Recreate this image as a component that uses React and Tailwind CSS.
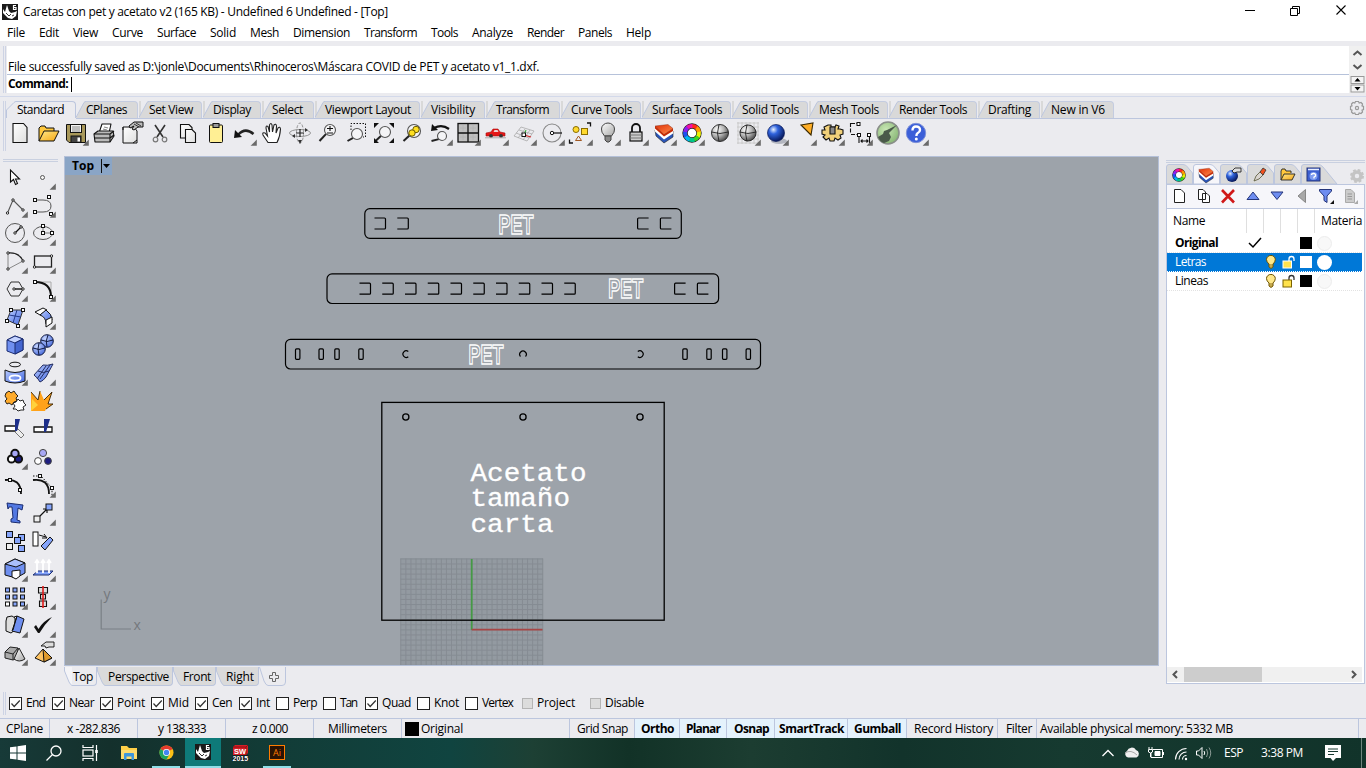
import React, { useLayoutEffect, useRef, useState } from "react";

/* Text set to the width of its box by adjusting the letter spacing */
function Fit({ className = "", children }) {
  const box = useRef(null);
  const inner = useRef(null);
  const [spacing, setSpacing] = useState(0);
  useLayoutEffect(() => {
    const n = String(children).length;
    const natural = inner.current.getBoundingClientRect().width;
    setSpacing((box.current.getBoundingClientRect().width - natural) / n);
  }, [children]);
  return (
    <span ref={box} className={"block shrink-0 whitespace-nowrap " + className}>
      <span ref={inner} style={{ letterSpacing: spacing ? `${spacing}px` : undefined }}>
        {children}
      </span>
    </span>
  );
}

const K = "#111";
const sq = (x, y, f = "#fff", s = 3) => (
  <rect x={x - s / 2} y={y - s / 2} width={s} height={s} fill={f} stroke={K} strokeWidth="1" />
);
const dot = (x, y) => <circle cx={x} cy={y} r="1.2" fill="#fff" stroke={K} strokeWidth="0.9" />;

function Cell({ children, fly }) {
  return (
    <svg width="28" height="28" viewBox="-14 -14 28 28" fill="none" className="block shrink-0">
      {children}
      {fly && <path d="M12.8 6.6V12.8H6.6Z" fill="#6a6a6a" />}
    </svg>
  );
}

function Defs() {
  return (
    <svg width="0" height="0" className="absolute">
      <defs>
        <linearGradient id="blue" x1="0" y1="0" x2="1" y2="1">
          <stop offset="0" stopColor="#b9ccff" /><stop offset="1" stopColor="#4468e0" />
        </linearGradient>
        <linearGradient id="yellow" x1="0" y1="0" x2="1" y2="1">
          <stop offset="0" stopColor="#ffe98a" /><stop offset="1" stopColor="#f5a613" />
        </linearGradient>
        <linearGradient id="orange" x1="0" y1="0" x2="1" y2="1">
          <stop offset="0" stopColor="#e03208" /><stop offset="1" stopColor="#ff8a4a" />
        </linearGradient>
        <linearGradient id="grey" x1="0" y1="0" x2="1" y2="1">
          <stop offset="0" stopColor="#ffffff" /><stop offset="1" stopColor="#a8a8a8" />
        </linearGradient>
        <linearGradient id="paper" x1="0" y1="0" x2="1" y2="1">
          <stop offset="0" stopColor="#ffffff" /><stop offset="1" stopColor="#dedede" />
        </linearGradient>
        <radialGradient id="ballGrey" cx="0.35" cy="0.3" r="0.75">
          <stop offset="0" stopColor="#fff" /><stop offset="0.5" stopColor="#b5b5b5" /><stop offset="1" stopColor="#444" />
        </radialGradient>
        <radialGradient id="ballBlue" cx="0.35" cy="0.3" r="0.75">
          <stop offset="0" stopColor="#e6f0ff" /><stop offset="0.35" stopColor="#2f63dd" /><stop offset="1" stopColor="#04124f" />
        </radialGradient>
        <radialGradient id="ballLight" cx="0.35" cy="0.3" r="0.8">
          <stop offset="0" stopColor="#c9d8ff" /><stop offset="1" stopColor="#3f63d8" />
        </radialGradient>
        <radialGradient id="ballGreen" cx="0.4" cy="0.35" r="0.7">
          <stop offset="0" stopColor="#c8e6b4" /><stop offset="1" stopColor="#86b573" />
        </radialGradient>
      </defs>
    </svg>
  );
}

const hues = ["#ff2a1c", "#ff9a00", "#e9f000", "#3fd51c", "#00c68a", "#00b5f0", "#2050f0", "#8a20f0", "#f010a8"];
function Wheel({ r = 7, w = 4 }) {
  return (
    <g>
      <circle r={r} stroke="#222" strokeWidth={w + 1.4} fill="#fff" />
      {hues.map((c, i) => {
        const a = ((i * 40 - 90) * Math.PI) / 180;
        const b = (((i + 1) * 40 - 87) * Math.PI) / 180;
        return (
          <path key={c} stroke={c} strokeWidth={w}
            d={`M${r * Math.cos(a)} ${r * Math.sin(a)}A${r} ${r} 0 0 1 ${r * Math.cos(b)} ${r * Math.sin(b)}`} />
        );
      })}
    </g>
  );
}
const Lens = ({ x = 2, y = -3, r = 5.5 }) => (
  <g>
    <path d={`M${x - r * 0.7} ${y + r * 0.7}L-8.5 8`} stroke="#222" strokeWidth="2" />
    <circle cx={x} cy={y} r={r} stroke="#555" strokeWidth="1.1" fill="#f4f4f6" />
  </g>
);
const Page = () => <path d="M-7 -9.500H3.500L7 -5.500V9.500H-7Z" fill="url(#paper)" stroke={K} strokeWidth="1.1" />;
const Layers = () => (
  <g strokeLinejoin="round">
    <path d="M-9 -3L-8 3L0 10L9 4V-2L0 4Z" fill="#2a55b8" stroke="#222" strokeWidth="0.6" />
    <path d="M-9 -5V-1.500L0 6.500L9 0.500V-3L0 3Z" fill="#fff" />
    <path d="M-9 -7V-4.500L0 3.500L9 -2V-4.500L0 1Z" fill="#c92a04" />
    <path d="M-9 -7L4 -8.500L9 -4.500L0 1.500Z" fill="url(#orange)" stroke="#7a2410" strokeWidth="0.4" />
  </g>
);
const Ball = ({ f = "url(#ballGrey)", r = 8.500 }) => (
  <g>
    <circle r={r} fill={f} stroke="#222" strokeWidth="0.9" />
    <path d="M-8.500 -1Q0 2 8.500 -1M-1 -8.500Q-4 0 -1 8.500" stroke="#222" strokeWidth="0.9" />
  </g>
);

const tools = [
  [0, <Page />],
  [0, <g stroke={K} strokeWidth="1" strokeLinejoin="round"><path d="M-9 8V-5L-7 -7H-3L-2 -5H6V-2" fill="#ffc83d" /><path d="M-9 8L-4 -2H11L6 8Z" fill="url(#yellow)" /></g>],
  [1, <g stroke={K} strokeWidth="1"><path d="M-9.500 -8.500H9.500V9.500H-7L-9.500 7Z" fill="#a8985a" /><rect x="-5.500" y="-8.500" width="11" height="8" fill="#f4f4f4" /><path d="M-4 -6H4M-4 -4H4M-4 -2H4" stroke="#888" /><rect x="-5" y="3" width="10" height="6.500" fill="#444" /><rect x="1.500" y="4.500" width="2.500" height="4" fill="#fff" stroke="none" /></g>],
  [0, <g stroke={K} strokeWidth="1.100" strokeLinejoin="round"><path d="M-5 0L-2 -9H7L5 0" fill="#fff" /><path d="M-10 1L-6 -2H9L10 3L6 9H-9Z" fill="#bbb" /><path d="M-10 1H6V9M-9 5H6M6 1L10 -2M6 5L10 2" /><path d="M0 -6L4 -5M-1 -4L3 -3" stroke="#888" /></g>],
  [0, <g><path d="M-9 -6H2L5 -2V10H-9Z" fill="url(#paper)" stroke={K} /><path d="M-9 -6V-3M1 10L5 7" stroke={K} /><path d="M-3 -7L2 -11H11V-6H6L2 -3L0 -4L2 -7L-2 -5Z" fill="#bbb" stroke={K} /><path d="M2 -9L7 -6M4 -10L9 -7" stroke={K} strokeWidth="0.800" /></g>],
  [0, <g><path d="M-5 -8L3 4M5 -8L-3 4" stroke="#333" strokeWidth="1.600" /><circle cx="-4.500" cy="6.500" r="2.300" stroke="#777" strokeWidth="1.200" /><circle cx="4.500" cy="6.500" r="2.300" stroke="#777" strokeWidth="1.200" /></g>],
  [0, <g fill="url(#paper)" stroke={K} strokeWidth="1.100"><path d="M-7.500 -8.500H1L4 -5.500V5H-7.500Z" /><path d="M-2.500 -3.500H4L7.500 0V9.500H-2.500Z" /></g>],
  [0, <g stroke={K}><rect x="-6.500" y="-8" width="13" height="17.500" rx="1" fill="#ffef94" /><rect x="-3" y="-9.500" width="6" height="4" fill="#999" /></g>],
  [1, <g><path d="M-6 2Q1 -6 9.500 1" stroke="#222" strokeWidth="2.600" /><path d="M-10 5L-9 -3L-2 4Z" fill="#111" /></g>],
  [0, <path d="M-4 9.500L-9 2Q-10 -1 -7 0L-4.500 3L-6 -5Q-6 -8 -4 -6.500L-2.500 -1L-2.500 -8Q-1 -11 0 -8L0.500 -1L2 -8Q4 -10 4.500 -7L4 0L6 -5Q8 -7 8.500 -4Q8 4 5 9.500Z" fill="#fff" stroke="#222" strokeWidth="1.100" />],
  [0, <g strokeWidth="0.900"><ellipse rx="10.500" ry="3.500" stroke="#888" /><ellipse rx="3.500" ry="10" stroke="#888" strokeDasharray="3 1.500" /><path d="M-4 0H4M0 -4V4" stroke="#222" strokeWidth="1.200" /><path d="M5 -5L8 -3L5 -1ZM-5 5L-8 3L-5 1ZM0 11L2 7L-2 7Z" fill="#333" /></g>],
  [0, <g><Lens /><path d="M-1 -4.500H5M2 -7V-2M-1 0H5" stroke={K} strokeWidth="1.100" /></g>],
  [0, <g><Lens x={1} y={1} /><path d="M-5 -3V-9.500H9.500V4H7" stroke={K} strokeDasharray="1.500 1.500" /></g>],
  [0, <g><Lens x={1} y={-1} /><path d="M-10 -10H-5L-10 -5ZM10 -10H5L10 -5ZM10 10H5L10 5ZM-10 10H-5L-10 5Z" fill="#111" /></g>],
  [0, <g><Lens x={2} y={-2} r={6.500} /><circle cx="4" cy="-3.500" r="3.200" fill="#ffdf20" stroke="#6b5c00" /><circle cx="0" cy="0" r="3.200" fill="#ffdf20" stroke="#6b5c00" /></g>],
  [1, <g><Lens x={2} y={3} r={4.500} /><path d="M-6 -5Q2 -9 9 -4" stroke="#111" strokeWidth="2.200" /><path d="M-9 -2L-8 -9L-2 -3Z" fill="#111" /></g>],
  [1, <g><rect x="-10" y="-9.500" width="20.500" height="18.500" fill="#c0c0c0" stroke={K} strokeWidth="1.300" /><path d="M0 -9V9M-10 0H10" stroke={K} strokeWidth="1.300" /><path d="M-5 -8V-2M-8 -5H-2M2 -5H8M5 -8V-2M-8 4H-2M-5 1V7M2 4H8M5 1V7" stroke="#b2b2b2" strokeWidth="0.800" /></g>],
  [1, <g><path d="M-10 3V0L-5 -1L-3 -4H2L4 -1L9 0V3Z" fill="#e51616" stroke="#a80f0f" strokeWidth="0.600" /><path d="M-1.500 -3H1.500L2.500 -1H-2.500Z" fill="#f0d0d0" /><circle cx="-5" cy="3" r="1.900" fill="#333" /><circle cx="5" cy="3" r="1.900" fill="#333" /><path d="M-11 4.800H10" stroke="#aaa" /></g>],
  [1, <g><path d="M-10 3L-3 -6L10 -2L3 8ZM-8 0L5 5M-5 -3L8 1M-6 5L1 -4M-1 7L6 -3" stroke="#aaa" strokeWidth="0.800" /><path d="M0 2L7 4" stroke="#c22" strokeWidth="1.300" /><path d="M0 2L2 -3" stroke="#2a2" /><rect x="-2" y="0" width="3.500" height="3.500" fill="#fff" stroke={K} /></g>],
  [1, <g><circle r="9" stroke="#888" strokeWidth="1.100" /><path d="M0 0H10" stroke={K} strokeWidth="1.200" /><circle r="1.700" fill="#fff" stroke={K} /></g>],
  [1, <g><path d="M7 -10H10.500V-6.500M-7 10H-10.500V6.500" stroke={K} strokeWidth="1.300" /><circle cx="-4" cy="-3.500" r="3" fill="#ffd92e" stroke="#8a6d00" /><rect x="1.500" y="-4.500" width="6" height="6" fill="#ffd92e" stroke="#8a6d00" /><path d="M-4.500 7.500L-1.500 3L1.500 7.500Z" stroke="#a25822" /></g>],
  [1, <g stroke="#444"><path d="M-3.500 3Q-7 -1 -6.500 -4A6.500 6 0 0 1 6.500 -4Q7 -1 3.500 3Z" fill="url(#grey)" /><path d="M-3 3H3V7L1 9H-1L-3 7Z" fill="#888" /></g>],
  [1, <g stroke={K}><path d="M-4 -1V-5A4 4 0 0 1 4 -5V-1" strokeWidth="1.800" /><rect x="-6" y="-1" width="12" height="9" fill="#ccc" strokeWidth="1.200" /><path d="M-6 2H6M-6 5H6" stroke="#777" /></g>],
  [1, <Layers />],
  [1, <Wheel />],
  [0, <Ball />],
  [1, <g><path d="M-11 -10H11M-11 -6H11M-11 -2H11M-11 2H11M-11 6H11M-11 10H11M-10 -11V11M-6 -11V11M-2 -11V11M2 -11V11M6 -11V11M10 -11V11" stroke="#c4c4c4" strokeWidth="0.800" /><Ball r={8} /></g>],
  [1, <g><ellipse cx="3" cy="8" rx="8" ry="3" fill="#b4b7c0" /><circle r="8.500" fill="url(#ballBlue)" stroke="#0a1a5c" strokeWidth="0.700" /></g>],
  [1, <path d="M-3 -8L9 -10L7 2Z" fill="#ffae26" stroke="#3b2a00" strokeWidth="1.100" />],
  [1, <g><path d="M-4 -8H-1V-6H3L4 -8L7 -7L6 -4L8 -4L11 -3V1L8 2L9 5L6 7L3 5L2 8H-2L-3 5L-6 7L-9 4L-7 2L-10 1V-3L-7 -3L-8 -6L-6 -7Z" fill="#f0d07a" stroke={K} strokeWidth="1.100" /><path d="M-2 -6V1H3V-6Z" fill="#888" stroke={K} strokeWidth="1.100" /></g>],
  [1, <g stroke={K} strokeWidth="1.100"><path d="M-9.500 -10V1M-9 -9.500H-2M-9 1.500H-1" strokeDasharray="4 1.500" /><path d="M-1 2V10M9.500 2V10M1 8H8M2.500 6.500L1 8L2.500 9.500M6.500 6.500L8 8L6.500 9.500" />{sq(-1.500, -9)}{sq(-1, 2)}{sq(9, 2)}</g>],
  [0, <g><circle r="11" fill="url(#ballGreen)" stroke="#8a8f8a" strokeWidth="1.600" /><path d="M-10 4L-5 1L-4 -2L-1 -3L9 -8L1 0L3 4L1 8L-4 10Q-8 9 -10 4Z" fill="#4a5a4a" /></g>],
  [1, <g><circle r="9.700" fill="#3b5fd8" stroke="#7d90d8" /><path d="M-3.500 -2.500Q-3.500 -6.500 0 -6.500Q4 -6.500 4 -3Q4 -1 1.500 0.300Q0.400 1 0.400 3" stroke="#fff" strokeWidth="2.400" /><circle cx="0.300" cy="6" r="1.500" fill="#fff" /></g>],
];

const palette = [
  [0, <path d="M-4.500 -7V5L-1.500 2.500L0.500 7.500L2.500 6.500L0.500 2H4.500Z" fill="#fff" stroke={K} strokeWidth="1.100" />],
  [1, <circle cx="-0.500" cy="0.500" r="2" fill="#f5f5f5" stroke="#555" />],
  [1, <g><path d="M-7.500 8L-2 -5L8 5" stroke="#555" strokeWidth="1.100" />{dot(-7.5, 8)}{dot(-2, -5)}{dot(8, 5)}</g>],
  [1, <g><path d="M-8 -5H0Q8 -5 8 1Q8 7 0 7H-8" stroke="#555" />{sq(-8, -5)}{sq(-8, 7)}{sq(6, -8)}{sq(8, 9)}</g>],
  [1, <g><circle r="9.500" stroke="#555" /><path d="M0 0L6 -6" stroke={K} strokeWidth="1.300" />{dot(0, 0)}{dot(6, -6)}</g>],
  [1, <g><ellipse rx="9.500" ry="6.500" stroke="#555" /><path d="M0 -6V0H9" stroke="#777" />{sq(0, -7)}{sq(0, 0)}{sq(9, 0)}</g>],
  [1, <g><path d="M-7 -8V8L8 0" stroke="#888" /><path d="M-7 -8Q4 -9 8 0" stroke="#222" strokeWidth="1.300" />{dot(-7, -8)}{dot(-7, 8)}{dot(8, 0)}</g>],
  [1, <g><rect x="-8.500" y="-5" width="17" height="11" stroke="#222" strokeWidth="1.300" />{dot(8.5, -5)}{dot(-8.5, 6)}</g>],
  [1, <g><path d="M-4 -7H4L8 0L4 7H-4L-8 0Z" stroke="#333" /><path d="M-1 0H8" stroke={K} strokeWidth="1.400" />{dot(-1, 0)}{dot(8, 0)}</g>],
  [1, <g><path d="M-8 -7H8V8" stroke="#aaa" /><path d="M-8 -7Q8 -7 8 8" stroke={K} strokeWidth="2" />{sq(-8, -7)}{sq(8, 8)}</g>],
  [1, <g><path d="M-4 -7L8 -7L3 8L-8 3Z" fill="url(#blue)" stroke="#333" /><path d="M2 -7L-2 6M-6 -2L6 0" stroke="#233a8a" />{sq(-4, -7)}{sq(8, -7)}{sq(3, 9)}{sq(-8, 4)}</g>],
  [1, <g stroke={K}><path d="M-8 -5L0 -9L4 -7L-3 -2Z" fill="#fff" /><path d="M-3 -2L3 -7Q9 -3 9 3L3 7Q3 0 -3 -2Z" fill="url(#blue)" /><path d="M3 3L9 0V6L3 10Z" fill="#fff" /></g>],
  [1, <g stroke="#1b2c70" strokeLinejoin="round"><path d="M-8 -5L0 -9L8 -6V5L0 9L-8 6Z" fill="#6f8ff0" /><path d="M-8 -5L0 -2L8 -6L0 -9Z" fill="#c3d2ff" /><path d="M0 -2V9L8 5V-6Z" fill="#4465cf" /></g>],
  [1, <g stroke="#111a40"><circle cx="4" cy="-4" r="6.300" fill="url(#ballLight)" /><circle cx="-4" cy="4" r="6.300" fill="url(#ballLight)" /><path d="M-10 3Q-4 6 2 3M-4 -2Q-6 4 -4 10M-2 -5Q4 -2 10 -5M5 -10Q2 -4 4 2" /></g>],
  [1, <g><ellipse cx="0" cy="-8.500" rx="5.500" ry="2.300" stroke={K} /><path d="M-10 -3Q0 2 10 -3V8Q0 12 -10 8Z" fill="url(#blue)" stroke={K} /><ellipse cx="0" cy="5" rx="5.500" ry="2.600" stroke="#fff" strokeWidth="1.800" /></g>],
  [1, <g stroke="#222c60" strokeLinejoin="round"><path d="M-9 2L0 -8Q4 -7 10 -9L3 4Q0 8 -3 9Q-5 5 -9 2Z" fill="url(#blue)" /><path d="M-5 -2Q0 1 6 -2M3 -7L-6 6M7 -8L-3 6" /></g>],
  [0, <g stroke={K} strokeWidth="0.900"><path d="M-9 -8L-6 -10L-4 -8L-1 -10L1 -7L3 -5L1 -3L2 0L-1 1L-3 4L-6 2L-8 3L-10 0L-8 -2L-10 -5Z" fill="#ffab2b" /><path d="M1 1L3 -2L5 0L8 -1L9 2L11 4L8 6L9 9L6 9L3 10L1 8L-2 8L0 5L-2 2Z" fill="#fff" /></g>],
  [0, <g><path d="M-12 -9L-5 -1L-3 -10L1 -1L9 -9L5 3H10L3 8L2 10H-12Z" fill="#ffa21a" /><path d="M-12 -9L-5 -1L-3 -10M1 -1L9 -9L5 3L10 3L3 8" stroke="#3a2200" strokeWidth="0.900" /><path d="M-12 10L-11 -2L-5 4Z" fill="#ffd23c" /></g>],
  [0, <g><path d="M-10 -3H2V2H-10Z" fill="#fff" stroke={K} strokeWidth="1.300" /><path d="M0 3L6 9L9 6L3 0Z" fill="#eee" stroke="#777" /><path d="M0 -10H5L2 2H0Z" fill="#1d2f8a" /></g>],
  [0, <g><path d="M-9 -2H9V3H-9Z" fill="#fff" stroke={K} strokeWidth="1.300" /><path d="M1 -10H7L3 3H1Z" fill="#1d2f8a" /></g>],
  [1, <g stroke={K} strokeWidth="2"><circle cx="-3.500" cy="2" r="3.600" fill="#fff" /><circle cx="3.500" cy="2" r="3.600" fill="#1d1d80" /><circle cx="0" cy="-3.500" r="3.700" fill="#a7a7f5" /></g>],
  [0, <g stroke="#444"><circle cx="-5" cy="4" r="3.400" fill="#fff" /><circle cx="5" cy="4" r="3.400" fill="#1d1d80" /><circle cx="0" cy="-4" r="3.600" fill="#a7a7f5" /></g>],
  [0, <g><path d="M-10 -5Q6 -7 6 9" stroke={K} strokeWidth="1.800" />{sq(-5, -5)}{sq(5, 5)}</g>],
  [1, <g><path d="M-10 -5Q6 -7 6 9" stroke={K} strokeWidth="1.800" /><path d="M-10 -9H-2L9 3V11" stroke={K} strokeDasharray="1.500 1.500" />{sq(-3, -9)}{sq(9, 3)}</g>],
  [0, <path d="M-8 -10L8 -8L7 -3L3 -5L2 7L5 8V10L-4 9V6L-2 5L-3 -6L-6 -6L-7 -4Z" fill="#5278e2" stroke="#1b2c70" strokeWidth="1" />],
  [1, <g><path d="M-3 3L4 -4M0 -4H4V0" stroke={K} strokeWidth="1.200" /><rect x="-9" y="3" width="6" height="6" fill="#eee" stroke={K} /><rect x="3" y="-9" width="6" height="6" fill="#86a5fb" stroke={K} /></g>],
  [0, <g stroke={K}><rect x="-8.500" y="-9.500" width="6" height="6" fill="#86a5fb" /><rect x="3.500" y="-6.500" width="6" height="6" fill="#86a5fb" /><rect x="-0.500" y="-3.500" width="6" height="6" fill="#86a5fb" /><rect x="-8.500" y="2.500" width="6" height="6" fill="#eee" /><rect x="3.500" y="4.500" width="6" height="6" fill="#86a5fb" /></g>],
  [0, <g><rect x="-10" y="-9" width="5" height="14" fill="#fff" stroke={K} /><path d="M-4 -6L3 -4M1 -7L4 -3L-1 -3" stroke={K} /><path d="M-2 5L7 -4L10 -1L2 9Z" fill="#86a5fb" stroke={K} /></g>],
  [1, <g stroke={K} strokeLinejoin="round"><path d="M-10 -5L0 -10L10 -6V4L1 9L-10 6Z" fill="#6f8ff0" /><path d="M-10 -5L1 -2L10 -6L0 -10Z" fill="#a9bffc" /><path d="M-3 8V2L5 1V7L1 10Z" fill="#fff" /></g>],
  [1, <g><path d="M-10 6L-5 2H10L6 6Z" fill="#7f9ff8" stroke="#1b2c70" /><path d="M-6 4V-8M0 4V-8M6 4V-8M-8 -6L-6 -9L-4 -6M-2 -6L0 -9L2 -6M4 -6L6 -9L8 -6" stroke="#fff" strokeWidth="1.800" /></g>],
  [1, <g>{[-7.5, 0, 7.500].map((x) => [-7, 0, 7].map((y) => <g key={x + "," + y}>{sq(x, y, x < 0 && y > 0 ? "#fff" : "#86a5fb", 4)}</g>))}</g>],
  [1, <g><path d="M-4.500 -9.500H4.500V-4H-4.500ZM-2.500 -2.500H2.500V2H-2.500ZM-3.500 4H3.500V9.500H-3.500Z" fill="#ddd" stroke={K} strokeWidth="1.100" /><path d="M0 -11V11" stroke="#e21b1b" strokeWidth="1.600" /></g>],
  [1, <g stroke={K}><path d="M-9 -4L-8 -8L-3 -9L0 -7V5L-4 8L-9 6Z" fill="#ddd" /><path d="M2 -9L9 -6L5 8L-3 6Z" fill="#6f8ff0" /><path d="M-2 5L2 -9L-1 -8" /></g>],
  [1, <path d="M-9 2L-7 0L-4.500 4Q0 -4 9 -8Q1 0 -3.500 8H-5Z" fill="#111" />],
  [1, <g stroke="#222"><path d="M-10 -1L-5 -6L3 -5V5L-2 7L-10 5Z" fill="#aaa" /><path d="M-10 -1L-2 1L3 -5M-2 1V7" /><path d="M4 -5L10 6Q4 10 -1 6Z" fill="url(#grey)" /></g>],
  [1, <g stroke={K}><path d="M-8 5L0 -4L9 5L1 9Z" fill="#ffc463" /><path d="M0 -4L1 9L9 5Z" fill="#e09a2c" /><path d="M-2 -7L3 -11H11V-6H6L3 -5L2 -7Z" fill="#ddd" strokeWidth="0.900" /></g>],
];

const MENU = [["File", "w-[18px]"], ["Edit", "w-[20px]"], ["View", "w-[25px]"], ["Curve", "w-[31px]"], ["Surface", "w-[39px]"], ["Solid", "w-[26px]"], ["Mesh", "w-[29px]"], ["Dimension", "w-[57px]"], ["Transform", "w-[53px]"], ["Tools", "w-[27px]"], ["Analyze", "w-[41px]"], ["Render", "w-[37px]"], ["Panels", "w-[34px]"], ["Help", "w-[25px]"]];

const TABS = [["CPlanes", "w-[63px]", "w-[41px]"], ["Set View", "w-[64px]", "w-[44px]"], ["Display", "w-[59px]", "w-[38px]"], ["Select", "w-[53px]", "w-[31px]"], ["Viewport Layout", "w-[106px]", "w-[86px]"], ["Visibility", "w-[65px]", "w-[44px]"], ["Transform", "w-[75px]", "w-[53px]"], ["Curve Tools", "w-[81px]", "w-[61px]"], ["Surface Tools", "w-[90px]", "w-[70px]"], ["Solid Tools", "w-[77px]", "w-[57px]"], ["Mesh Tools", "w-[80px]", "w-[60px]"], ["Render Tools", "w-[89px]", "w-[68px]"], ["Drafting", "w-[63px]", "w-[43px]"], ["New in V6", "w-[74px]", "w-[54px]"]];

const SNAPS = [["End", 1, "w-[43px]", "w-[19px]"], ["Near", 1, "w-[48px]", "w-[25px]"], ["Point", 1, "w-[51px]", "w-[28px]"], ["Mid", 1, "w-[44px]", "w-[21px]"], ["Cen", 1, "w-[44px]", "w-[20px]"], ["Int", 1, "w-[37px]", "w-[14px]"], ["Perp", 0, "w-[47px]", "w-[24px]"], ["Tan", 0, "w-[42px]", "w-[17px]"], ["Quad", 1, "w-[52px]", "w-[29px]"], ["Knot", 0, "w-[48px]", "w-[25px]"], ["Vertex", 0, "w-[57px]", "w-[31px]"], ["Project", 2, "w-[68px]", "w-[38px]"], ["Disable", 2, "w-[60px]", "w-[39px]"]];

const STATUS = [["CPlane", "w-[50px] pl-[6px]", "w-[37px]"], ["x -282.836", "w-[88px] pl-[17px]", "w-[53px]"], ["y 138.333", "w-[88px] pl-[20px]", "w-[48px]"], ["z 0.000", "w-[88px] pl-[26px]", "w-[36px]"], ["Millimeters", "w-[88px] pl-[14px]", "w-[59px]"], ["Original", "w-[168px] pl-[3px]", "w-[42px]", "swatch"], ["Grid Snap", "w-[65px] pl-[7px]", "w-[51px]"], ["Ortho", "w-[45px] pl-[6px]", "w-[33px]", "on"], ["Planar", "w-[47px] pl-[6px]", "w-[34px]", "on"], ["Osnap", "w-[48px] pl-[7px]", "w-[35px]", "on"], ["SmartTrack", "w-[73px] pl-[4px]", "w-[65px]", "on"], ["Gumball", "w-[59px] pl-[6px]", "w-[47px]", "on"], ["Record History", "w-[91px] pl-[7px]", "w-[79px]"], ["Filter", "w-[39px] pl-[8px]", "w-[26px]"], ["Available physical memory: 5332 MB", "w-[322px] pl-[3px]", "w-[193px]"]];

const RhinoLogo = () => (
  <svg width="16" height="16" viewBox="0 0 16 16" className="block shrink-0">
    <rect width="16" height="16" fill="#1a1a1a" />
    <path d="M1 5L3 8L5 1L7 7L9 9L13 8L15 7L14 12L10 15L6 14L1 9Z" fill="#fff" />
    <path d="M4 9L7 12L9 10M10 12L12 11" stroke="#333" strokeWidth="1" fill="none" />
    <path d="M14 1.500H11.500V5.500H14V3.500H11.500" stroke="#fff" strokeWidth="1.200" fill="none" />
  </svg>
);

const Gear = ({ c = "#999", solid }) => (
  <svg width="16" height="16" viewBox="-8 -8 16 16" className="block shrink-0" fill="none">
    {solid ? (
      <g><circle r="4" stroke={c} strokeWidth="3.500" /><circle r="6" stroke={c} strokeWidth="2" strokeDasharray="2.700 2.010" /></g>
    ) : (
      <g stroke={c} strokeWidth="1.200"><path d="M-1.500 -6.500H1.500L2.200 -5L4 -5.500L5.500 -4L5 -2.200L6.500 -1.500V1.500L5 2.200L5.500 4L4 5.500L2.200 5L1.500 6.500H-1.500L-2.200 5L-4 5.500L-5.500 4L-5 2.200L-6.500 1.500V-1.500L-5 -2.200L-5.500 -4L-4 -5.500L-2.200 -5Z" /><circle r="1.600" /></g>
    )}
  </svg>
);

function TitleBar() {
  return (
    <div className="flex h-[22px] items-center bg-white pl-[2px] pt-px">
      <RhinoLogo />
      <Fit className="ml-[5px] w-[365px]">Caretas con pet y acetato v2 (165 KB) - Undefined 6 Undefined - [Top]</Fit>
      <svg width="110" height="16" viewBox="0 0 110 16" className="mb-[3px] ml-auto mr-[16px] block" fill="none" stroke="#000">
        <path d="M5 8.500H15M50.500 6.500H57.500V13.500H50.500ZM52.500 6V4.500H59.500V11.500H58" strokeWidth="1" />
        <path d="M96.500 3.500L105.500 12.500M105.500 3.500L96.500 12.500" strokeWidth="1.100" />
      </svg>
    </div>
  );
}

function CommandArea() {
  return (
    <div className="flex h-[56px] shrink-0 border-b border-[#d3d9ea] pb-[3px] pt-[5px]">
      <div className="ml-[3px] mr-px w-[3px] border-x border-[#cdd3e4]" />
      <div className="flex flex-1 flex-col bg-white">
        <div className="flex h-[29px] items-end border-b border-[#b6c2da] pl-px">
          <Fit className="mb-[-2px] w-[531px] leading-[18px]">File successfully saved as D:\jonle\Documents\Rhinoceros\Máscara COVID de PET y acetato v1_1.dxf.</Fit>
        </div>
        <div className="flex h-[18px] items-center pl-px">
          <Fit className="mb-px w-[60px] font-bold leading-[16px]">Command:</Fit>
          <div className="ml-[3px] h-[15px] w-px bg-black" />
        </div>
      </div>
      <div className="flex w-[17px] flex-col items-center bg-[#f0f0f0]">
        <svg width="17" height="47" viewBox="0 0 17 47" fill="none">
          <path d="M4.500 9L8.500 5.500L12.500 9M4.500 19L8.500 22.500L12.500 19" stroke="#555" strokeWidth="2" />
          <rect x="2" y="30.500" width="13" height="7" fill="#f4f4f4" stroke="#999" /><rect x="2" y="39" width="13" height="7" fill="#f4f4f4" stroke="#999" />
          <path d="M5.500 35.500L8.500 32L11.500 35.500ZM5.500 41L8.500 44.500L11.500 41Z" fill="#000" />
        </svg>
      </div>
    </div>
  );
}

function ToolTabs() {
  return (
    <div className="flex h-[18px] shrink-0">
      <div className="w-[6px]" />
      <svg width="10" height="17" viewBox="0 0 10 17" className="block shrink-0"><path d="M0.500 17V9L8 1.500Q9 0.500 10 0.500" fill="none" stroke="#bcc6de" /></svg>
      <div className="flex h-[17px] w-[60px] items-center rounded-tr border-r border-t border-[#bcc6de] pl-px">
        <Fit className="w-[47px]">Standard</Fit>
      </div>
      {TABS.map(([label, cell, w], i) => (
        <div key={label} className={"flex h-[18px] shrink-0 items-center border-b border-[#bcc6de] " + cell}>
          <svg width="10" height="17" viewBox="0 0 10 17" className="block shrink-0">
            <path d="M0 17L8 1Q9 0 10 0V17Z" fill="#d9d9d9" />
            {i > 0 && <path d="M0 0H2V13L0 17Z" fill="#d9d9d9" />}
            <path d="M0 16.500L8 1.500Q9 0.500 10 0.500" fill="none" stroke="#bcc6de" />
          </svg>
          <div className="mr-px flex h-[17px] flex-1 items-center rounded-tr border-r border-t border-[#c4cce0] bg-[#d9d9d9]">
            <Fit className={w}>{label}</Fit>
          </div>
        </div>
      ))}
      <div className="flex-1 border-b border-[#bcc6de]" />
    </div>
  );
}

const range = (n) => Array.from({ length: n }, (_, i) => i);
const Pet = ({ x, y }) => (
  <text x={x} y={y} textLength="35" lengthAdjust="spacingAndGlyphs" fontSize="28" fontWeight="700" fill="none" stroke="#fff" strokeWidth="1.500" opacity="0.980" fontFamily="'Liberation Sans', sans-serif">PET</text>
);
const slotR = (x, y) => <path key={"r" + x} d={`M${x - 11} ${y - 5.500}h10q1 0 1 1v9q0 1 -1 1h-10`} />;
const slotL = (x, y) => <path key={"l" + x} d={`M${x + 11} ${y - 5.500}h-10q-1 0 -1 1v9q0 1 1 1h10`} />;

function Viewport() {
  return (
    <div className="relative h-[510px] w-[1095px] shrink-0 border border-[#b4c0d8] bg-[#9da3aa]">
      <svg width="1093" height="508" viewBox="65 157 1093 508" className="block" fill="none">
        <rect x="400.500" y="558.500" width="142.500" height="110" fill="#939aa1" />
        <path stroke="#868c93" strokeWidth="1" d={range(29).map((i) => `M${400.800 + i * 5.070} 558.500V666`).join("") + range(22).map((i) => `M400.500 ${558.900 + i * 5.070}H543`).join("")} />
        <path d="M471.700 559V630" stroke="#459a45" strokeWidth="1.800" />
        <path d="M471.700 629.600H542.500" stroke="#a84646" strokeWidth="1.800" />
        <g stroke="#000" strokeWidth="1.200">
          <rect x="364.800" y="208.700" width="316.500" height="29.600" rx="5" />
          <rect x="327" y="273.900" width="391.600" height="29.600" rx="5" />
          <rect x="285.500" y="339.400" width="475" height="29.600" rx="5" />
          <rect x="381.800" y="402.400" width="282.400" height="217.800" strokeWidth="1.300" />
          {slotR(385.500, 223.500)}{slotR(408.300, 223.500)}{slotL(637.600, 223.500)}{slotL(660.400, 223.500)}
          {range(10).map((i) => slotR(370.500 + i * 22.750, 288.700))}
          {slotL(674.600, 288.700)}{slotL(697.400, 288.700)}
          {[297.700, 321.200, 337, 361, 685, 709, 724.700, 748.300].map((x) => <rect key={x} x={x - 2.200} y="348.900" width="4.400" height="10.400" rx="1" />)}
          <path d="M408.300 351.500A3.300 3.300 0 1 0 408.300 356.700M520.500 356.500A3.300 3.300 0 1 1 525.500 356.500M637.800 351.500A3.300 3.300 0 1 1 637.800 356.700" />
          {[405.800, 523, 640].map((x) => <circle key={x} cx={x} cy="417" r="3.100" strokeWidth="1.300" />)}
        </g>
        <Pet x="498.500" y="233.500" /><Pet x="608.200" y="297.700" /><Pet x="468.500" y="364.400" />
        <g fill="#fff" stroke="#fff" strokeWidth="0.300" fontSize="25" fontFamily="'Liberation Mono', monospace">
          <text x="470.500" y="481" textLength="116" lengthAdjust="spacingAndGlyphs">Acetato</text>
          <text x="470.500" y="506" textLength="99.500" lengthAdjust="spacingAndGlyphs">tamaño</text>
          <text x="470.500" y="531.500" textLength="83" lengthAdjust="spacingAndGlyphs">carta</text>
        </g>
        <path d="M101.200 599.500V629H131" stroke="#7b8086" strokeWidth="1.200" />
        <g fill="#74787d" fontSize="14" fontFamily="'Open Sans', sans-serif"><text x="103.500" y="598.500">y</text><text x="133.500" y="630">x</text></g>
      </svg>
      <div className="absolute left-0 top-0 flex h-[18px] w-[47px] items-center bg-[#8aa5c6] pl-[7px]">
        <Fit className="w-[22px] font-bold">Top</Fit>
        <svg width="14" height="14" viewBox="0 0 14 14" className="ml-[7px] block shrink-0"><path d="M0.500 0V14" stroke="#111" /><path d="M2 5H9L5.500 9Z" fill="#000" /></svg>
      </div>
    </div>
  );
}

function ViewTabs() {
  const tabs = [["Top", "w-[33px]", "w-[20px]", "bg-[#ebebef] pl-px"], ["Perspective", "w-[76px]", "w-[61px]", "bg-[#dadada] pl-[3px]"], ["Front", "w-[43px]", "w-[28px]", "bg-[#dadada] pl-[2px]"], ["Right", "w-[43px]", "w-[28px]", "bg-[#dadada] pl-[2px]"]];
  return (
    <div className="flex h-[22px] items-start pt-px">
      {tabs.map(([label, cell, w, bg], i) => (
        <div key={label} className={"flex h-[19px] shrink-0 items-start " + cell}>
          <svg width="8" height="19" viewBox="0 0 8 19" className="block shrink-0">
            <path d="M0 0V3L6 17L8 19V0Z" fill={i ? "#dadada" : "#f4f4f7"} />
            <path d="M0.500 0V4L5 15Q7 18.500 8 18.500" fill="none" stroke="#bcc6de" />
          </svg>
          <div className={"flex h-[19px] flex-1 items-center rounded-br border-b border-r border-[#bcc6de] pt-px " + bg}>
            <Fit className={w}>{label}</Fit>
          </div>
        </div>
      ))}
      <svg width="28" height="19" viewBox="0 0 28 19" className="block shrink-0" fill="none">
        <path d="M0.500 0L5 14Q7 18.500 9 18.500H23Q26.500 18.500 26.500 15V0" stroke="#bcc6de" />
        <path d="M13.500 5.500H16.500V8.500H19.500V11.500H16.500V14.500H13.500V11.500H10.500V8.500H13.500Z" stroke="#666" />
      </svg>
    </div>
  );
}

const Bulb = () => (
  <svg width="12" height="14" viewBox="0 0 12 14" className="block shrink-0"><path d="M4 9Q1.500 7 1.500 4.500A4.300 4 0 0 1 10.300 4.500Q10.300 7 8 9V12L6 13.500L4 12Z" fill="#ffe88a" stroke="#6b5200" /><path d="M4 10H8M4 12H8" stroke="#8a6a10" /></svg>
);
const Padlock = ({ white }) => (
  <svg width="13" height="14" viewBox="0 0 13 14" className="block shrink-0"><path d="M7 6V4A2.500 2.500 0 0 1 12 4V6" fill="none" stroke={white ? "#fff" : "#333"} strokeWidth="1.300" /><rect x="1" y="6" width="8.500" height="7" fill="#ffe24d" stroke={white ? "#fff" : "#7a6200"} /></svg>
);

function LayerRow({ name, bold, sel, check, icons, swatch }) {
  return (
    <div className={"flex h-[19px] items-center border-b border-dotted pl-[8px] " + (sel ? "border-white bg-[#0078d7] text-white" : "border-[#e2e2e2]")}>
      <div className="w-[73px]"><Fit className={bold ? "w-[43px] font-bold" : name === "Letras" ? "w-[31px]" : "w-[33px]"}>{name}</Fit></div>
      <div className="w-[17px]">{check && <svg width="14" height="12" viewBox="0 0 14 12" fill="none"><path d="M1 6L5 10L13 1" stroke="#000" strokeWidth="1.500" /></svg>}</div>
      <div className="w-[17px]">{icons && <Bulb />}</div>
      <div className="w-[18px]">{icons && <Padlock white={sel} />}</div>
      <div className={"mr-[5px] h-[12px] w-[12px] " + swatch} />
      <div className={"h-[15px] w-[15px] rounded-full " + (sel ? "bg-white" : "border border-[#ededed] bg-[#f8f8f8]")} />
    </div>
  );
}

const panelTabs = [
  <g transform="scale(.7)"><Wheel /></g>,
  <g transform="scale(.8)"><Layers /></g>,
  <g><circle cx="-1" cy="1" r="6" fill="url(#ballBlue)" /><path d="M-1 -4L2 -7H8V-3H4L1 -2Z" fill="#ddd" stroke="#111" strokeWidth=".8" /></g>,
  <g><path d="M-6 6L-4 1L1 -4L4 -1L-1 4Z" fill="#d9d4cf" stroke="#553" strokeWidth=".8" /><path d="M0 -3L3 -7L6 -5L3 0Z" fill="#f0501e" stroke="#333" strokeWidth=".8" /></g>,
  <g stroke="#222" strokeWidth=".9"><path d="M-6 5V-4L-5 -6H-2L-1 -4H4V-2" fill="#ffc83d" /><path d="M-6 5L-3 -1H8L5 5Z" fill="url(#yellow)" /></g>,
  <g><rect x="-7" y="-7" width="13" height="13" fill="#3c5fd0" stroke="#24357a" /><path d="M-6 -5.500H5" stroke="#e8eeff" strokeWidth="1.500" /><circle cx="-.5" cy="1" r="4" fill="#7f9cf0" /><path d="M-2.500 0Q-2.500 -1.500 -.5 -1.500Q2 -1.500 1.500 1L0 2V3.500" stroke="#fff" strokeWidth="1.300" /></g>,
];

function LayerPanel() {
  const cols = ["w-[80px] pl-[6px]", "w-[17px]", "w-[17px]", "w-[17px]", "w-[17px]"];
  return (
    <div className="flex w-[199px] shrink-0 flex-col pt-[4px]">
      <div className="h-[3px] border-y border-[#c9d0e0]" />
      <div className="flex h-[22px] items-end border-b border-[#bcc6de] pt-[2px]">
        {panelTabs.map((icon, i) => (
          <svg key={i} width="27" height="20" viewBox="-13 -10 27 20" fill="none" className="block shrink-0 overflow-visible">
            <path d={i === 5 ? "M-12.500 10V-7Q-12.500 -9.500 -10 -9.500H4Q7 -9.500 9 -7L23 10Z" : "M-12.500 10V-7Q-12.500 -9.500 -10 -9.500H4Q7 -9.500 8.500 -7L13.500 -1V10Z"} fill={i === 1 ? "#f6f6fa" : "#dadada"} stroke="#bcc6de" />
            <g transform="translate(0 1)">{icon}</g>
          </svg>
        ))}
        <div className="ml-auto"><Gear c="#c4c4c4" solid /></div>
      </div>
      <div className="flex h-[499px] w-[199px] flex-col border border-t-0 border-[#bcc6de] bg-white">
        <div className="h-[24px] shrink-0 border-b border-[#bcc6de] bg-[#f6f6fa]">
          <svg width="197" height="22" viewBox="1167 185 197 22" fill="none">
            <path d="M1174.500 189.500H1181L1184.500 193V202.500H1174.500Z" fill="#fff" stroke="#222" />
            <path d="M1198.500 189.500H1203L1205.500 192V199.500H1198.500ZM1202.500 193.500H1207L1209.500 196V202.500H1202.500Z" fill="#fff" stroke="#222" />
            <path d="M1222 190L1234 202.500M1234 190L1222 202.500" stroke="#d01818" strokeWidth="2.600" />
            <path d="M1247 199.500L1253 192L1259 199.500Z" fill="#6e8df0" stroke="#24357a" />
            <path d="M1271 192L1277 199.500L1283 192Z" fill="#6e8df0" stroke="#24357a" />
            <path d="M1305.500 189.500V202.500L1298 196Z" fill="#a8a8a8" stroke="#888" />
            <path d="M1319.500 189.500H1331.500V191L1327 196V202.500L1324 200.500V196L1319.500 191Z" fill="#6e8df0" stroke="#24357a" /><path d="M1334 200V204H1330Z" fill="#111" />
            <path d="M1345.500 189.500H1351L1354.500 193V202.500H1345.500Z" fill="#ccc" stroke="#aaa" /><path d="M1347.500 194H1352M1347.500 196.500H1352M1347.500 199H1352" stroke="#999" /><path d="M1358 200V204H1354Z" fill="#aaa" />
          </svg>
        </div>
        <div className="flex h-[25px] shrink-0 items-center pb-px">
          {cols.map((c, i) => (
            <div key={i} className={"flex h-full items-center border-r border-[#dfdfdf] " + c}>{i === 0 && <Fit className="w-[32px]">Name</Fit>}</div>
          ))}
          <Fit className="ml-[6px] w-[41px]">Materia</Fit>
        </div>
        <div className="mr-[2px]">
          <LayerRow name="Original" bold check swatch="bg-black" />
          <LayerRow name="Letras" sel icons swatch="bg-white" />
          <LayerRow name="Lineas" icons swatch="bg-black" />
        </div>
        <div className="mb-px mr-[2px] mt-auto flex h-[15px] items-center bg-[#f0f0f0]">
          <svg width="17" height="15" viewBox="0 0 17 15" fill="none"><path d="M10 4L6.500 7.500L10 11" stroke="#555" strokeWidth="2" /></svg>
          <div className="h-[15px] w-[78px] bg-[#cdcdcd]" />
          <svg width="16" height="15" viewBox="0 0 16 15" fill="none" className="ml-auto"><path d="M6 4L9.500 7.500L6 11" stroke="#555" strokeWidth="2" /></svg>
        </div>
      </div>
    </div>
  );
}

function SnapBar() {
  return (
    <div className="flex h-[26px] shrink-0 items-center pb-[4px] pl-[3px]">
      <div className="mr-[3px] h-[23px] w-[3px] border-x border-[#cdd3e4]" />
      {SNAPS.map(([label, state, cell, w]) => (
        <div key={label} className={"flex shrink-0 items-center " + cell}>
          {state === 2 ? (
            <div className="mr-[4px] h-[11px] w-[11px] border border-[#b4b4b4] bg-[#dcdcdc]" />
          ) : (
            <svg width="13" height="13" viewBox="0 0 13 13" className="mr-[4px] block shrink-0"><rect x=".5" y=".5" width="12" height="12" fill="#fff" stroke="#222" />{state === 1 && <path d="M2.500 6.500L5.200 9.500L10.800 3.500" fill="none" stroke="#333" strokeWidth="1.200" />}</svg>
          )}
          <Fit className={w}>{label}</Fit>
        </div>
      ))}
    </div>
  );
}

function StatusBar() {
  return (
    <div className="flex h-[20px] shrink-0 border-t border-[#bcc6de]">
      {STATUS.map(([label, cell, w, kind]) => (
        <div key={label} className={"flex shrink-0 items-center border-r border-[#bcc6de] pt-px " + cell + (kind === "on" ? " bg-[#e4f2fc] font-bold" : "")}>
          {kind === "swatch" && <div className="mr-[2px] h-[14px] w-[14px] bg-black" />}
          <Fit className={w}>{label}</Fit>
        </div>
      ))}
    </div>
  );
}

function TaskBar() {
  const item = "flex h-[30px] items-center justify-center shrink-0 ";
  return (
    <div className="flex h-[30px] shrink-0 bg-[linear-gradient(90deg,#173a38_0%,#14302c_8%,#123c37_20%,#104440_33%,#1d4034_39%,#123227_46%,#1c3d31_55%,#12332b_66%,#163a30_78%,#11332a_100%)] text-white">
      <div className={item + "w-[36px]"}>
        <svg width="16" height="16" viewBox="0 0 16 16" fill="#fff"><path d="M0 2.300L6.500 1.400V7.500H0ZM7.500 1.200L16 0V7.500H7.500ZM0 8.500H6.500V14.600L0 13.700ZM7.500 8.500H16V16L7.500 14.800Z" /></svg>
      </div>
      <div className={item + "w-[36px]"}>
        <svg width="16" height="16" viewBox="0 0 16 16" fill="none" stroke="#fff" strokeWidth="1.300"><circle cx="10" cy="6" r="5" /><path d="M6.500 9.500L0.500 15.500" /></svg>
      </div>
      <div className={item + "w-[36px]"}>
        <svg width="17" height="16" viewBox="0 0 17 16" fill="none" stroke="#fff" strokeWidth="1.200"><path d="M1 0V2.500H11V0M1 16V13.500H11V16M14.500 0V16" /><rect x="1" y="5" width="10" height="6" /><path d="M13.200 6.500H15.800" strokeWidth="3" /></svg>
      </div>
      <div className={item + "w-[43px] pr-[2px]"}>
        <svg width="16" height="14" viewBox="0 0 16 14"><path d="M0 0H6L8 2H16V13H0Z" fill="#ffcf48" /><path d="M0 4H16V13H0Z" fill="#ffdc70" /><path d="M3 14V8Q3 7 4 7H12Q13 7 13 8V14H10.500V10.500H5.500V14Z" fill="#3f97dc" /></svg>
      </div>
      <div className="flex w-[34px] shrink-0 justify-start pl-px">
        <div className={item + "w-[28px] border-b-2 border-[#8fdfe8]"}>
          <svg width="15" height="15" viewBox="-8 -8 16 16"><circle r="7.500" fill="#fbc116" /><path d="M0 0L-6.500 -3.750A7.500 7.500 0 0 1 6.500 -3.750Z" fill="#e33b2e" /><path d="M0 0L-6.500 -3.750A7.500 7.500 0 0 0 0 7.500L3 2Z" fill="#1da462" /><circle r="3.700" fill="#fff" /><circle r="2.900" fill="#4285f4" /></svg>
        </div>
      </div>
      <div className={item + "w-[36px] border-b-2 border-[#8fdfe8] bg-[#0e7a79]"}><RhinoLogo /></div>
      <div className={item + "w-[38px]"}>
        <svg width="17" height="16" viewBox="0 0 17 16"><path d="M1 2L3 0H16V8L14 10H1Z" fill="#d61f26" /><path d="M1 2H14V10M14 2L16 0" stroke="#8d0e13" fill="none" /><g fill="#fff" fontFamily="'Liberation Sans', sans-serif" fontWeight="700"><text x="2" y="9" fontSize="7.500">SW</text><text x="0.500" y="16" fontSize="7" stroke="#111" strokeWidth="1.500" paintOrder="stroke">2015</text></g></svg>
      </div>
      <div className="flex w-[36px] shrink-0 justify-center">
        <div className={item + "w-[28px] border-b-2 border-[#8fdfe8]"}>
          <div className="flex h-[15px] w-[16px] items-center justify-center border border-[#ff7c00] bg-[#2b1303] text-[9px] leading-none text-[#ff7c00]">Ai</div>
        </div>
      </div>
      <div className="ml-auto flex w-[266px] items-center">
        <svg width="116" height="18" viewBox="1100 744 116 18" fill="none" stroke="#fff" className="shrink-0">
          <path d="M1102.500 756L1108 750.500L1113.500 756" strokeWidth="1.300" />
          <path d="M1128 757.500A3.500 3.500 0 0 1 1127 751A5 5 0 0 1 1136 750A4 4 0 0 1 1136.500 757.500Z" fill="#f0f0f0" stroke="none" /><path d="M1125 753Q1131 749 1137 755" stroke="#aaa" />
          <path d="M1152.500 749.500H1162.500V757.500H1151V753M1163.500 752V755" /><path d="M1155 751.500H1160V755.500H1155Z" fill="#fff" /><path d="M1149 747V749M1152 747V749M1148.500 749.500H1152.500V752Q1150.500 754 1148.500 752ZM1150.500 753V757" />
          <path d="M1175.500 759.500A11 11 0 0 1 1186.500 748.500M1179 759.500A7.500 7.500 0 0 1 1186.500 752M1182.500 759.500A4 4 0 0 1 1186.500 755.500" strokeWidth="1.100" /><circle cx="1186" cy="759" r="1.200" fill="#fff" stroke="none" />
          <path d="M1196.500 751H1198.500L1202 747.500V758.500L1198.500 755H1196.500ZM1204 751Q1205.500 753 1204 755" /><path d="M1206.500 749Q1209 753 1206.500 757M1209 747.500Q1212.500 753 1209 758.500" stroke="#8a9a94" />
        </svg>
        <Fit className="ml-[8px] w-[19px]">ESP</Fit>
        <Fit className="ml-[18px] w-[42px]">3:38 PM</Fit>
        <svg width="16" height="17" viewBox="0 0 16 17" className="ml-[22px] shrink-0"><path d="M0 0H16V13H11L8 16L5.500 13H0Z" fill="#fff" /><path d="M3 4H13M3 6.500H13M3 9.500H9" stroke="#173a31" /></svg>
        <div className="ml-auto mr-[4px] h-[30px] w-px bg-[#6f857e]" />
      </div>
    </div>
  );
}

export default function App() {
  return (
    <div className="flex h-[768px] w-[1366px] flex-col overflow-hidden bg-[#ebebef] font-['Open_Sans','Noto_Sans',sans-serif] text-[12px] leading-[16px] text-black">
      <Defs />
      <TitleBar />
      <div className="flex h-[19px] shrink-0 items-center gap-[14px] bg-white pl-[7px] pt-[3px]">
        {MENU.map(([label, w]) => <Fit key={label} className={w}>{label}</Fit>)}
      </div>
      <CommandArea />
      <div className="flex h-[59px] shrink-0 pt-[4px]">
        <div className="ml-[3px] h-[50px] w-[3px] shrink-0 border-x border-[#cdd3e4]" />
        <div className="ml-[-6px] flex flex-1 flex-col">
          <div className="relative flex">
            <div className="flex-1"><ToolTabs /></div>
            <div className="absolute right-[1px] top-[-1px]"><Gear /></div>
          </div>
          <div className="ml-[6px] flex h-[28px]">
            {tools.map(([fly, icon], i) => <Cell key={i} fly={fly}>{icon}</Cell>)}
          </div>
        </div>
      </div>
      <div className="flex h-[536px] shrink-0">
        <div className="flex w-[64px] shrink-0 flex-col">
          <div className="ml-[3px] mt-[3px] h-[3px] w-[55px] shrink-0 border-y border-[#c9d0e0]" />
          <div className="ml-px mt-[1px] grid w-[56px] grid-cols-2">
            {palette.map(([fly, icon], i) => <Cell key={i} fly={fly}>{icon}</Cell>)}
          </div>
        </div>
        <div className="flex w-[1102px] shrink-0 flex-col">
          <Viewport />
          <ViewTabs />
        </div>
        <LayerPanel />
      </div>
      <SnapBar />
      <StatusBar />
      <TaskBar />
    </div>
  );
}
